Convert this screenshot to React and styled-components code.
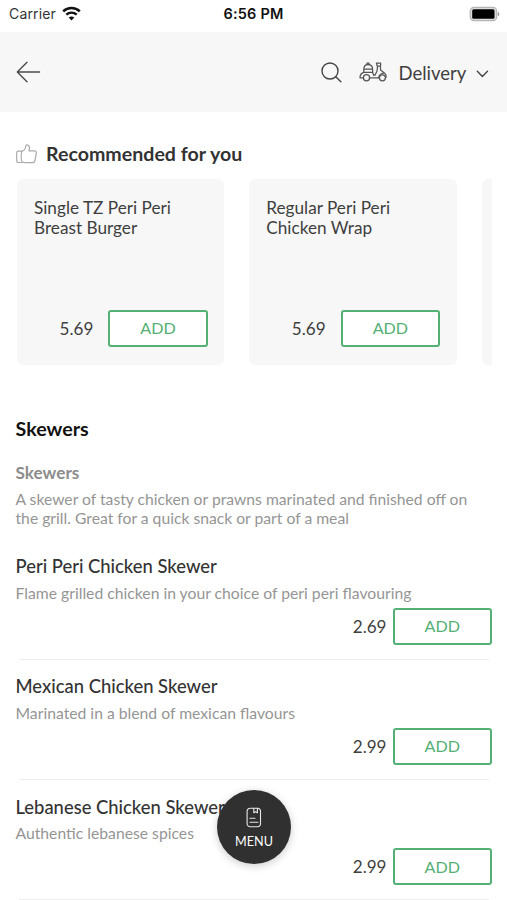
// App.jsx
import React from 'react'
import styled, { createGlobalStyle } from 'styled-components'

const theme = {
	green: '#54b074',
	dark: '#333333',
	text: '#3f3f3f',
	muted: '#959595',
	panel: '#f7f7f7',
}

const GlobalStyle = createGlobalStyle`
	* {
		box-sizing: border-box;
	}

	body {
		margin: 0;
		background: #fff;
		font-family: Lato, 'Open Sans', sans-serif;
		overflow: hidden;
	}
`

const Screen = styled.div`
	position: relative;
	width: 507px;
	height: 900px;
	overflow: hidden;
	background: #fff;
	color: ${theme.text};
`

const StatusBar = styled.div`
	display: grid;
	grid-template-columns: 1fr auto 1fr;
	align-items: center;
	height: 32px;
	padding: 0 7px 5px 9px;
	font-family: Inter, 'Liberation Sans', sans-serif;
	font-size: 14px;
	line-height: 18px;
	color: #333;
`

const Carrier = styled.div`
	display: flex;
	align-items: center;
	gap: 6px;
	letter-spacing: 0.15px;
`

const Clock = styled.div`
	margin-right: 2px;
	font-size: 14.5px;
	font-weight: 600;
	letter-spacing: 0.2px;
	color: #111;
`

const Battery = styled.svg`
	justify-self: end;
`

const Header = styled.header`
	display: flex;
	align-items: center;
	justify-content: space-between;
	height: 80px;
	padding: 0 18.5px 0 16px;
	background: ${theme.panel};
`

const HeaderActions = styled.div`
	display: flex;
	align-items: center;
`

const DeliverySelect = styled.div`
	display: flex;
	align-items: center;
	margin-left: 17px;
	font-size: 18.5px;
	line-height: 24px;

	span {
		width: 68px;
		margin: 1px 9px 0 12px;
		white-space: nowrap;
	}

	svg:last-child {
		margin-top: 3px;
	}
`

const RecommendedTitle = styled.h2`
	display: flex;
	align-items: center;
	gap: 9px;
	height: 24px;
	margin: 30px 0 0 16px;
	font-size: 19.6px;
	font-weight: 700;
	line-height: 24px;
	color: ${theme.dark};
`

const Cards = styled.div`
	display: flex;
	gap: 25px;
	margin: 13px 15px 0 17px;
	overflow: hidden;
`

const Card = styled.div`
	display: flex;
	flex: 0 0 207.3px;
	flex-direction: column;
	justify-content: space-between;
	height: 185.5px;
	padding: 18.5px 16.5px 18px 17px;
	border-radius: 6px;
	background: ${theme.panel};
`

const CardName = styled.div`
	font-size: 17.2px;
	line-height: 20.5px;
	white-space: pre-line;
`

const PriceRow = styled.div`
	display: flex;
	align-items: center;
	justify-content: flex-end;
	gap: ${({ $gap }) => $gap}px;
	font-size: 17.1px;
	line-height: 20px;

	span {
		padding-top: 1px;
	}
`

const AddButton = styled.button`
	width: 99.5px;
	height: 37px;
	padding: 0 0 1px;
	border: 2px solid ${theme.green};
	border-radius: 3px;
	background: #fff;
	font-family: inherit;
	font-size: 16.1px;
	color: ${theme.green};
`

const Category = styled.section`
	padding: 0 15px 0 15.5px;
`

const CategoryTitle = styled.h2`
	margin: 52.5px 0 0;
	font-size: 19.7px;
	font-weight: 700;
	line-height: 24px;
	color: #111;
`

const SubTitle = styled.h3`
	margin: 22px 0 0;
	font-size: 17.2px;
	font-weight: 700;
	line-height: 20px;
	color: #8c8c8c;
`

const Description = styled.p`
	margin: 7px 0 0;
	font-size: 15.7px;
	line-height: 19px;
	color: ${theme.muted};
	white-space: pre-line;
`

const Items = styled.div`
	margin-top: 15.5px;
`

const Item = styled.article`
	height: 120.3px;
	padding-top: 10.5px;
`

const ItemName = styled.h4`
	margin: 0;
	font-size: 18.4px;
	font-weight: 500;
	line-height: 24px;
	color: ${theme.dark};
`

const ItemInfo = styled.div`
	height: 29.5px;
	padding-top: 4.5px;
	font-size: 15.72px;
	line-height: 20px;
	color: ${theme.muted};
`

const Divider = styled.div`
	height: 1px;
	margin: 14px 3px 0;
	background: #eeeeee;
`

const MenuButton = styled.button`
	position: absolute;
	top: 790px;
	left: 217px;
	display: flex;
	flex-direction: column;
	align-items: center;
	gap: 5px;
	width: 74px;
	height: 74px;
	padding: 17px 0 0;
	border: none;
	border-radius: 50%;
	background: #303030;
	box-shadow: 0 2px 8px rgba(0, 0, 0, 0.2);
	font-family: inherit;
	font-size: 12.6px;
	line-height: 17px;
	color: #fff;
`

const recommended = [
	{ name: 'Single TZ Peri Peri\nBreast Burger', price: '5.69' },
	{ name: 'Regular Peri Peri\nChicken Wrap', price: '5.69' },
]

const skewers = [
	{
		name: 'Peri Peri Chicken Skewer',
		info: 'Flame grilled chicken in your choice of peri peri flavouring',
		price: '2.69',
	},
	{
		name: 'Mexican Chicken Skewer',
		info: 'Marinated in a blend of mexican flavours',
		price: '2.99',
	},
	{
		name: 'Lebanese Chicken Skewer',
		info: 'Authentic lebanese spices',
		price: '2.99',
	},
]

const WifiIcon = () => (
	<svg width='19' height='15' viewBox='0 0 19 15' fill='none' stroke='#111'>
		<path d='M1.2 5.4c4.7-4.5 11.9-4.5 16.6 0' strokeWidth='2.6' />
		<path d='M4.3 8.7c3-2.8 7.4-2.8 10.4 0' strokeWidth='2.4' />
		<path d='M9.5 14.4 6.7 11.5c1.6-1.4 4-1.4 5.6 0z' fill='#111' stroke='none' />
	</svg>
)

const BatteryIcon = () => (
	<Battery width='31' height='16' viewBox='0 0 31 16'>
		<rect x='1.2' y='1.4' width='26.5' height='13.2' rx='3.8' fill='#ddd' stroke='#b5b5b5' strokeWidth='1.2' />
		<rect x='3.2' y='3.2' width='22.3' height='9.6' rx='1.5' fill='#000' />
		<path d='M28.8 5.7c2 .8 2 3.8 0 4.6z' fill='#999' />
	</Battery>
)

const BackIcon = () => (
	<svg width='25' height='22' viewBox='0 0 25 22' fill='none' stroke='#4b4b4b' strokeWidth='1.4' strokeLinecap='round' strokeLinejoin='round'>
		<path d='M23.5 11H1.3M11 1.2 1.3 11l9.7 9.7' />
	</svg>
)

const SearchIcon = () => (
	<svg width='21' height='21' viewBox='0 0 21 21' fill='none' stroke='#444' strokeWidth='1.4' strokeLinecap='round'>
		<circle cx='9' cy='9' r='8' />
		<path d='m14.8 14.8 5 5' />
	</svg>
)

const ScooterIcon = () => (
	<svg width='28' height='20' viewBox='0 0 28 20' fill='none' stroke='#555' strokeWidth='1.25' strokeLinecap='round' strokeLinejoin='round'>
		<path d='M4.8 10.4V7.2C4.8 4.4 6.4 2.6 9 2.6s4.6 1.8 4.6 4.6v3.2zM4.8 7h8.8M8 2.4V1.2h2v1.2' />
		<path d='M4.8 10.4C2.6 11 1 12.8 1 15.8h3.2M13.6 10.4l1.2 2.8M10.8 15.8h9' />
		<circle cx='7.5' cy='15.8' r='3.1' />
		<path d='M17.4 1h4.2v3h-3.4zM18.6 4l-.6 5-2 4.2h-1.2M21.4 4l.2 4 3.8 3c1.4 1.1 2 2.5 1.6 4.4M19.8 15.8c0-2.8 1.8-4.4 5.4-4.8' />
		<circle cx='23.4' cy='15.8' r='3' />
	</svg>
)

const ChevronIcon = () => (
	<svg width='13' height='8' viewBox='0 0 13 8' fill='none' stroke='#444' strokeWidth='1.4' strokeLinecap='round' strokeLinejoin='round'>
		<path d='m1.3 1.2 5.1 5.2 5.1-5.2' />
	</svg>
)

const ThumbIcon = () => (
	<svg width='21' height='20' viewBox='0 0 21 20' fill='none' stroke='#aaa' strokeWidth='1.2' strokeLinejoin='round'>
		<path d='M6 7.2H2.2C1.1 7.2.7 8 .7 9v7.5c0 1.3.6 2 1.7 2h3.8C4.8 16.3 4.9 9.3 6 7.2z' />
		<path d='M6 7.2c2.5-.7 3.5-2.4 3.7-5 .1-1.2.8-1.6 1.7-1.4 2.5.7 2.4 3.6 1.4 6h5.5c1.6 0 2.2 1 2 2.5l-1.3 7c-.3 1.7-1 2.4-2.7 2.4H9.7c-1.4 0-2.3-.2-3.5-.7' />
	</svg>
)

const MenuIcon = () => (
	<svg width='16' height='21' viewBox='0 0 16 21' fill='none' stroke='#e8e8e8' strokeWidth='1.1' strokeLinecap='round' strokeLinejoin='round'>
		<rect x='1.1' y='1.2' width='13.4' height='18.6' rx='3.2' />
		<path d='M7.8 1.2v4.6l1.8-1 1.8 1V1.2M4 11.2h5M4 15.2h8' />
	</svg>
)

const Price = ({ value, gap }) => (
	<PriceRow $gap={gap}>
		<span>{value}</span>
		<AddButton>ADD</AddButton>
	</PriceRow>
)

const App = () => {
	return (
		<>
			<GlobalStyle />
			<Screen>
				<StatusBar>
					<Carrier>
						Carrier
						<WifiIcon />
					</Carrier>
					<Clock>6:56 PM</Clock>
					<BatteryIcon />
				</StatusBar>
				<Header>
					<BackIcon />
					<HeaderActions>
						<SearchIcon />
						<DeliverySelect>
							<ScooterIcon />
							<span>Delivery</span>
							<ChevronIcon />
						</DeliverySelect>
					</HeaderActions>
				</Header>
				<RecommendedTitle>
					<ThumbIcon />
					Recommended for you
				</RecommendedTitle>
				<Cards>
					{recommended.map(({ name, price }) => (
						<Card key={name}>
							<CardName>{name}</CardName>
							<Price value={price} gap={15} />
						</Card>
					))}
					{/* next card peeks in from the right */}
					<Card />
				</Cards>
				<Category>
					<CategoryTitle>Skewers</CategoryTitle>
					<SubTitle>Skewers</SubTitle>
					<Description>
						{'A skewer of tasty chicken or prawns marinated and finished off on\nthe grill. Great for a quick snack or part of a meal'}
					</Description>
					<Items>
						{skewers.map(({ name, info, price }) => (
							<Item key={name}>
								<ItemName>{name}</ItemName>
								<ItemInfo>{info}</ItemInfo>
								<Price value={price} gap={6} />
								<Divider />
							</Item>
						))}
					</Items>
				</Category>
				<MenuButton>
					<MenuIcon />
					MENU
				</MenuButton>
			</Screen>
		</>
	)
}

export default App
